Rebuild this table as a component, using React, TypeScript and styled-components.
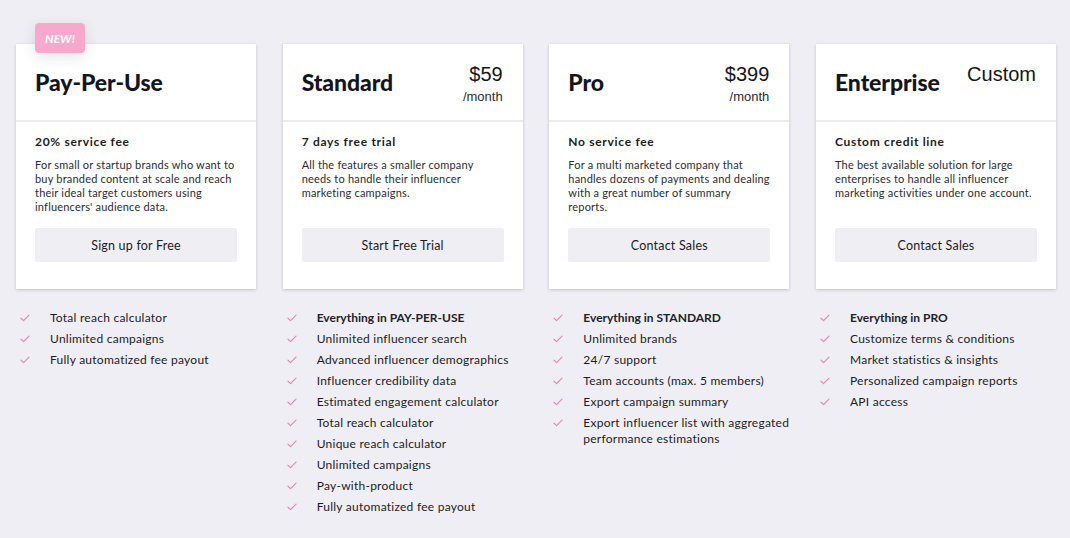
import React from "react";
import styled, { createGlobalStyle } from "styled-components";

const GlobalStyle = createGlobalStyle`
  body {
    margin: 0;
    background: #efeef4;
    font-family: "Lato", "Liberation Sans", sans-serif;
    color: #1c1c24;
  }
`;

interface Plan {
  name: string;
  price?: string;
  period?: string;
  isNew?: boolean;
  fee: string;
  description: string;
  cta: string;
  features: string[];
  lead?: string;
}

const plans: Plan[] = [
  {
    name: "Pay-Per-Use",
    isNew: true,
    fee: "20% service fee",
    description:
      "For small or startup brands who want to buy branded content at scale and reach their ideal target customers using influencers' audience data.",
    cta: "Sign up for Free",
    features: [
      "Total reach calculator",
      "Unlimited campaigns",
      "Fully automatized fee payout",
    ],
  },
  {
    name: "Standard",
    price: "$59",
    period: "/month",
    fee: "7 days free trial",
    description:
      "All the features a smaller company needs to handle their influencer marketing campaigns.",
    cta: "Start Free Trial",
    lead: "Everything in PAY-PER-USE",
    features: [
      "Unlimited influencer search",
      "Advanced influencer demographics",
      "Influencer credibility data",
      "Estimated engagement calculator",
      "Total reach calculator",
      "Unique reach calculator",
      "Unlimited campaigns",
      "Pay-with-product",
      "Fully automatized fee payout",
    ],
  },
  {
    name: "Pro",
    price: "$399",
    period: "/month",
    fee: "No service fee",
    description:
      "For a multi marketed company that handles dozens of payments and dealing with a great number of summary reports.",
    cta: "Contact Sales",
    lead: "Everything in STANDARD",
    features: [
      "Unlimited brands",
      "24/7 support",
      "Team accounts (max. 5 members)",
      "Export campaign summary",
      "Export influencer list with aggregated performance estimations",
    ],
  },
  {
    name: "Enterprise",
    price: "Custom",
    fee: "Custom credit line",
    description:
      "The best available solution for large enterprises to handle all influencer marketing activities under one account.",
    cta: "Contact Sales",
    lead: "Everything in PRO",
    features: [
      "Customize terms & conditions",
      "Market statistics & insights",
      "Personalized campaign reports",
      "API access",
    ],
  },
];

const Page = styled.div`
  display: grid;
  grid-template-columns: repeat(4, 240px);
  column-gap: 26.67px;
  padding: 44px 14px 20px 16px;
`;

const Column = styled.div`
  display: flex;
  flex-direction: column;
`;

const Card = styled.div`
  position: relative;
  background: #fff;
  height: 245px;
  display: flex;
  flex-direction: column;
  box-shadow: 0 1px 3px rgba(30, 30, 50, 0.22);
`;

const Badge = styled.div`
  position: absolute;
  top: -21px;
  left: 19px;
  width: 50px;
  height: 30px;
  border-radius: 4px;
  background: #f8a8cc;
  color: #fff;
  font-size: 12px;
  font-weight: 700;
  font-style: italic;
  display: flex;
  align-items: center;
  justify-content: center;
  box-shadow: 0 4px 14px rgba(40, 40, 60, 0.12);
`;

const Header = styled.div`
  height: 76px;
  display: flex;
  justify-content: space-between;
  align-items: center;
  padding: 0 20px 0 19px;
  border-bottom: 2px solid #ecebf0;
`;

const Title = styled.h2`
  margin: 0;
  font-size: 23px;
  font-weight: 900;
  letter-spacing: -0.1px;
  color: #15151c;
`;

const PriceBlock = styled.div`
  align-self: flex-start;
  margin-top: 18px;
  text-align: right;
`;

const Price = styled.div`
  font-size: 20px;
  line-height: 24px;
  font-family: "Liberation Sans", sans-serif;
  color: #15151c;
`;

const Period = styled.div`
  margin-top: 2px;
  font-size: 13px;
  line-height: 18px;
  font-family: "Liberation Sans", sans-serif;
  color: #2a2a33;
`;

const Body = styled.div`
  flex: 1;
  display: flex;
  flex-direction: column;
  padding: 12px 19px 27px 19px;
`;

const Fee = styled.div`
  font-size: 12px;
  font-weight: 700;
  letter-spacing: 0.7px;
  line-height: 16px;
`;

const Description = styled.p`
  margin: 8px 0 0;
  font-size: 11px;
  line-height: 14px;
  letter-spacing: 0.2px;
  color: #2b2b33;
`;

const Button = styled.button`
  margin-top: auto;
  height: 34px;
  width: 100%;
  border: none;
  border-radius: 2px;
  background: #efeef3;
  font-family: "Lato", "Liberation Sans", sans-serif;
  font-size: 12.5px;
  letter-spacing: 0.2px;
  color: #1c1c24;
  cursor: pointer;
`;

const FeatureList = styled.ul`
  list-style: none;
  margin: 18px 0 0;
  padding: 0;
`;

const Feature = styled.li<{ $lead?: boolean }>`
  display: flex;
  align-items: flex-start;
  font-size: 12px;
  line-height: 16px;
  padding: 2.5px 0;
  font-weight: ${({ $lead }) => ($lead ? 700 : 400)};
  color: ${({ $lead }) => ($lead ? "#22222a" : "#1c1c24")};
  letter-spacing: ${({ $lead }) => ($lead ? "0" : "0.25px")};
`;

const Check = styled.span`
  flex: 0 0 auto;
  width: 34px;
  padding-left: 4px;
  box-sizing: border-box;
  display: flex;
  height: 16px;
  align-items: center;
`;

const CheckIcon = () => (
  <svg width="10" height="8" viewBox="0 0 10 8">
    <path
      d="M1 4.2 L3.6 6.6 L9 1.2"
      fill="none"
      stroke="#e489b1"
      strokeWidth="1.2"
      strokeLinecap="round"
      strokeLinejoin="round"
    />
  </svg>
);

export default function App() {
  return (
    <>
      <GlobalStyle />
      <Page>
        {plans.map((plan) => (
          <Column key={plan.name}>
            <Card>
              {plan.isNew && <Badge>NEW!</Badge>}
              <Header>
                <Title>{plan.name}</Title>
                {plan.price && (
                  <PriceBlock>
                    <Price>{plan.price}</Price>
                    {plan.period && <Period>{plan.period}</Period>}
                  </PriceBlock>
                )}
              </Header>
              <Body>
                <Fee>{plan.fee}</Fee>
                <Description>{plan.description}</Description>
                <Button>{plan.cta}</Button>
              </Body>
            </Card>
            <FeatureList>
              {plan.lead && (
                <Feature $lead>
                  <Check>
                    <CheckIcon />
                  </Check>
                  {plan.lead}
                </Feature>
              )}
              {plan.features.map((f) => (
                <Feature key={f}>
                  <Check>
                    <CheckIcon />
                  </Check>
                  <span>{f}</span>
                </Feature>
              ))}
            </FeatureList>
          </Column>
        ))}
      </Page>
    </>
  );
}
